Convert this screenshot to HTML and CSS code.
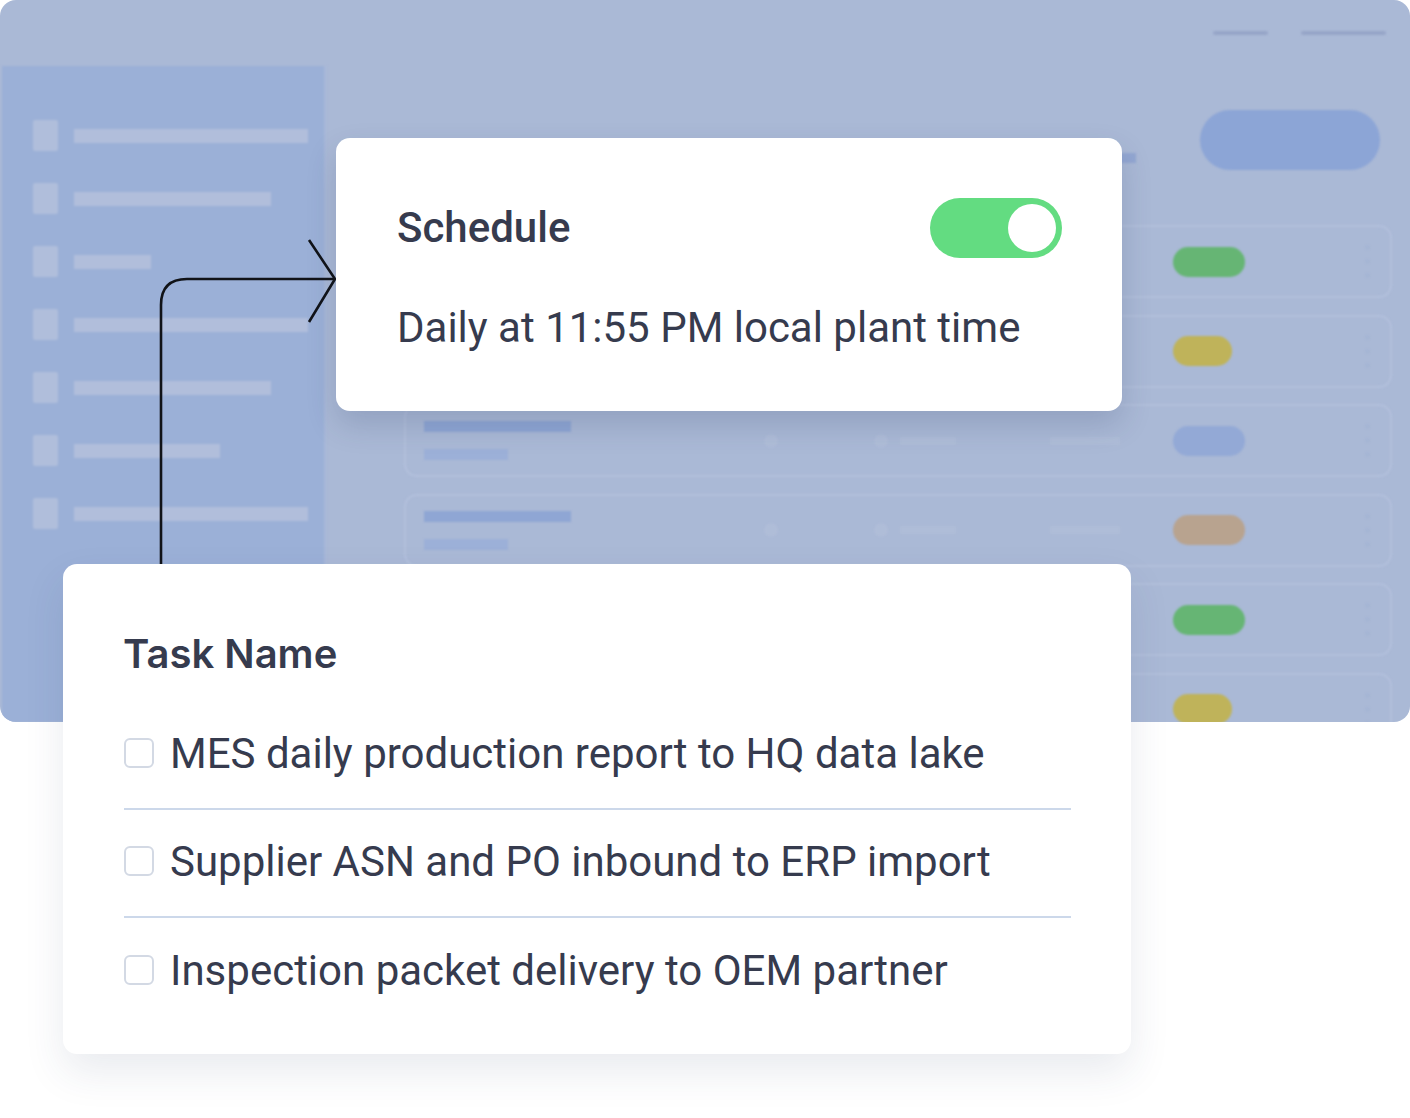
FILE: index.html
```html
<!DOCTYPE html>
<html lang="en">
<head>
<meta charset="utf-8">
<title>Schedule tasks</title>
<link rel="stylesheet" href="styles.css">
</head>
<body>
<div class="stage">
  <div class="dash">
    <div class="topbar">
      <span class="tb-line tb-a"></span>
      <span class="tb-line tb-b"></span>
    </div>
    <div class="dash-body">
      <aside class="sidebar">
        <div class="nav-item"><span class="nav-ico"></span><span class="nav-bar w1"></span></div>
        <div class="nav-item"><span class="nav-ico"></span><span class="nav-bar w2"></span></div>
        <div class="nav-item"><span class="nav-ico"></span><span class="nav-bar w3"></span></div>
        <div class="nav-item"><span class="nav-ico"></span><span class="nav-bar w1"></span></div>
        <div class="nav-item"><span class="nav-ico"></span><span class="nav-bar w2"></span></div>
        <div class="nav-item"><span class="nav-ico"></span><span class="nav-bar w4"></span></div>
        <div class="nav-item"><span class="nav-ico"></span><span class="nav-bar w1"></span></div>
      </aside>
      <main class="main">
        <div class="main-head">
          <span class="head-bar"></span>
          <span class="head-btn"></span>
        </div>
        <div class="rows">
          <div class="row"><div class="row-text"><span class="rt1"></span><span class="rt2"></span></div><div class="row-mid"><span class="dot"></span><span class="dot"></span><span class="mbar"></span><span class="mbar2"></span></div><div class="pill-cell"><span class="pill green"></span></div><span class="kebab"><i></i><i></i><i></i></span></div>
          <div class="row"><div class="row-text"><span class="rt1"></span><span class="rt2"></span></div><div class="row-mid"><span class="dot"></span><span class="dot"></span><span class="mbar"></span><span class="mbar2"></span></div><div class="pill-cell"><span class="pill yellow short"></span></div><span class="kebab"><i></i><i></i><i></i></span></div>
          <div class="row"><div class="row-text"><span class="rt1"></span><span class="rt2"></span></div><div class="row-mid"><span class="dot"></span><span class="dot"></span><span class="mbar"></span><span class="mbar2"></span></div><div class="pill-cell"><span class="pill blue"></span></div><span class="kebab"><i></i><i></i><i></i></span></div>
          <div class="row"><div class="row-text"><span class="rt1"></span><span class="rt2"></span></div><div class="row-mid"><span class="dot"></span><span class="dot"></span><span class="mbar"></span><span class="mbar2"></span></div><div class="pill-cell"><span class="pill tan"></span></div><span class="kebab"><i></i><i></i><i></i></span></div>
          <div class="row"><div class="row-text"><span class="rt1"></span><span class="rt2"></span></div><div class="row-mid"><span class="dot"></span><span class="dot"></span><span class="mbar"></span><span class="mbar2"></span></div><div class="pill-cell"><span class="pill green"></span></div><span class="kebab"><i></i><i></i><i></i></span></div>
          <div class="row"><div class="row-text"><span class="rt1"></span><span class="rt2"></span></div><div class="row-mid"><span class="dot"></span><span class="dot"></span><span class="mbar"></span><span class="mbar2"></span></div><div class="pill-cell"><span class="pill yellow short"></span></div><span class="kebab"><i></i><i></i><i></i></span></div>
        </div>
      </main>
    </div>
  </div>

  <svg class="connector" width="1410" height="1118" viewBox="0 0 1410 1118" aria-hidden="true">
    <path d="M161 564 V305 Q161 279 187 279 H334" fill="none" stroke="#111318" stroke-width="2.6"/>
    <path d="M309 240 L335 279 L309 322" fill="none" stroke="#111318" stroke-width="2.6" stroke-linejoin="miter"/>
  </svg>

  <section class="card schedule">
    <div class="sched-head">
      <h2 class="sched-title">Schedule</h2>
      <span class="toggle"><span class="knob"></span></span>
    </div>
    <p class="sched-text">Daily at 11:55 PM local plant time</p>
  </section>

  <section class="card tasks">
    <h2 class="tasks-title">Task Name</h2>
    <ul class="task-list">
      <li class="task"><span class="check"></span><span class="task-label">MES daily production report to HQ data lake</span></li>
      <li class="task"><span class="check"></span><span class="task-label">Supplier ASN and PO inbound to ERP import</span></li>
      <li class="task"><span class="check"></span><span class="task-label">Inspection packet delivery to OEM partner</span></li>
    </ul>
  </section>
</div>
</body>
</html>
```

FILE: styles.css
```css
* { box-sizing: border-box; }
html, body { margin: 0; padding: 0; background: #ffffff; }
body { font-family: Roboto, "Liberation Sans", sans-serif; color: #373c4f; }

.stage { position: relative; width: 1410px; height: 1118px; overflow: hidden; }

/* ---------- blurred dashboard backdrop ---------- */
.dash {
  width: 1410px; height: 722px;
  background: #aab9d6;
  border-radius: 16px;
  overflow: hidden;
  display: flex; flex-direction: column;
}
.topbar {
  height: 66px; flex: none;
  display: flex; justify-content: flex-end; align-items: flex-start;
  padding: 31px 24px 0 0; gap: 33px;
  filter: blur(1.2px);
}
.tb-line { height: 4px; background: #96a5c8; border-radius: 2px; }
.tb-a { width: 55px; }
.tb-b { width: 85px; }

.dash-body { flex: 1; display: flex; min-height: 0; }
.sidebar {
  width: 325px; flex: none;
  margin-left: 2px;
  background: #9bb0d7;
  border-right: 3px solid #a8b8d8;
  padding: 54px 0 0 31px;
  display: flex; flex-direction: column; gap: 32px;
  filter: blur(1px);
}
.nav-item { height: 31px; display: flex; align-items: center; gap: 16px; }
.nav-ico { width: 25px; height: 31px; background: #b0bedb; border-radius: 2px; }
.nav-bar { height: 14px; background: #b1bedb; }
.w1 { width: 234px; } .w2 { width: 197px; } .w3 { width: 77px; } .w4 { width: 146px; }

.main {
  flex: 1;
  padding: 44px 18px 0 77px;
  display: flex; flex-direction: column;
}
.main-head { height: 60px; display: flex; justify-content: flex-end; align-items: flex-start; padding-right: 12px; }
.head-bar { width: 160px; height: 10px; margin-top: 43px; margin-right: 64px; background: #93a7d2; filter: blur(1px); }
.head-btn { width: 180px; height: 60px; border-radius: 30px; background: #8ca5d6; filter: blur(1.2px); }

.rows { margin-top: 55px; display: flex; flex-direction: column; gap: 16.6px; }
.row {
  height: 73px; flex: none;
  border: 2px solid #b3c0dc;
  border-radius: 13px;
  display: flex; align-items: center;
  padding: 0 20px 0 18px;
  filter: blur(0.8px);
}
.row-text { width: 300px; display: flex; flex-direction: column; gap: 17px; }
.rt1 { width: 147px; height: 11px; background: #8fa6d4; }
.rt2 { width: 84px; height: 11px; background: #9cb0d8; }
.row-mid { width: 449px; display: flex; align-items: center; opacity: 0.3; }
.row-mid .dot { width: 14px; height: 14px; border-radius: 50%; background: #bdc8df; margin-left: 40px; }
.row-mid .dot + .dot { margin-left: 96px; }
.mbar { width: 56px; height: 8px; background: #bdc8df; margin-left: 12px; }
.mbar2 { width: 70px; height: 8px; background: #bdc8df; margin-left: 94px; }
.pill-cell { width: 72px; display: flex; }
.pill { width: 72px; height: 30px; border-radius: 15px; }
.pill.short { width: 59px; }
.green { background: #66b574; }
.yellow { background: #bfb35a; }
.blue { background: #93a9d6; }
.tan { background: #b8a38f; }
.kebab { margin-left: auto; display: flex; flex-direction: column; gap: 9px; opacity: 0.4; }
.kebab i { width: 5px; height: 5px; border-radius: 50%; background: #9fb0d2; }

/* ---------- connector ---------- */
.connector { position: absolute; left: 0; top: 0; pointer-events: none; }

/* ---------- floating cards ---------- */
.card {
  position: absolute;
  background: #ffffff;
  border-radius: 14px;
}
.schedule {
  left: 336px; top: 138px; width: 786px; height: 273px;
  padding: 60px 60px 0 61px;
  box-shadow: 0 14px 30px rgba(40, 55, 95, 0.18);
}
.sched-head { height: 60px; display: flex; align-items: center; justify-content: space-between; }
.sched-title { margin: 0; font-size: 42px; font-weight: 500; line-height: 48px; color: #363b4e; }
.toggle {
  width: 132px; height: 60px; border-radius: 30px;
  background: #63dc81;
  display: flex; align-items: center; justify-content: flex-end;
  padding-right: 6px;
}
.knob { width: 48px; height: 48px; border-radius: 50%; background: #ffffff; }
.sched-text { margin: 46px 0 0; font-size: 42px; line-height: 48px; font-weight: 400; color: #363b4e; }

.tasks {
  left: 63px; top: 564px; width: 1068px; height: 490px;
  padding: 66px 60px 0 60px;
  box-shadow: 0 18px 40px rgba(40, 55, 95, 0.10);
}
.tasks-title { margin: 0; font-family: Inter, Roboto, sans-serif; font-size: 40px; font-weight: 600; line-height: 48px; color: #363b4e; }
.task-list { list-style: none; margin: 24px 0 0; padding: 0 0 0 1px; }
.task {
  height: 108px;
  display: flex; align-items: center; gap: 16px;
  border-bottom: 2px solid #ccd8ea;
  padding-bottom: 2px;
}
.task:last-child { border-bottom: none; }
.check {
  width: 30px; height: 30px; flex: none;
  border: 2px solid #d3d9e4; border-radius: 6px;
  margin-top: -2px;
}
.task-label { font-size: 42px; line-height: 48px; color: #363b4e; }
```
